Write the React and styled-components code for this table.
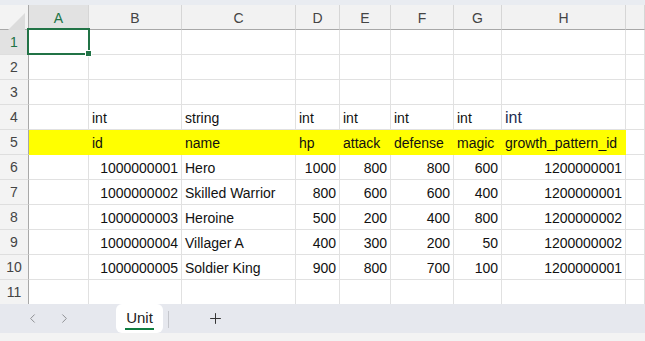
import React from "react";
import styled, { createGlobalStyle } from "styled-components";
import { ChevronLeft, ChevronRight, Plus } from "lucide-react";

const GlobalStyle = createGlobalStyle`
  html, body {
    margin: 0;
    padding: 0;
    background: #ffffff;
  }
  body {
    font-family: "Liberation Sans", Arial, sans-serif;
  }
`;

const Page = styled.div`
  width: 645px;
  height: 341px;
  display: flex;
  flex-direction: column;
  overflow: hidden;
  background: #ffffff;
`;

const TopStrip = styled.div`
  height: 5px;
  flex: none;
  background: #e9ecf1;
`;

const Sheet = styled.div`
  height: 299px;
  flex: none;
  overflow: hidden;
  display: grid;
  grid-template-columns: 29px 60px 93px 114px 44px 51px 63px 48px 124px 1fr;
  grid-auto-rows: 25px;
`;

const Corner = styled.div`
  position: relative;
  box-sizing: border-box;
  background: #f3f3f3;
  border-right: 1px solid #a8a8a8;
  border-bottom: 1px solid #a8a8a8;
  &::after {
    content: "";
    position: absolute;
    left: 8px;
    top: 8px;
    width: 17px;
    height: 17px;
    background: #dcdcdc;
    clip-path: polygon(100% 0, 100% 100%, 0 100%);
  }
`;

const ColHeader = styled.div`
  box-sizing: border-box;
  display: flex;
  align-items: center;
  justify-content: center;
  background: ${(p) => (p.$active ? "#e2e2e2" : "#f2f2f2")};
  color: ${(p) => (p.$active ? "#217346" : "#444444")};
  border-right: 1px solid #d6d6d6;
  border-bottom: 1px solid #a8a8a8;
  font-size: 14px;
  padding-top: 1px;
`;

const RowHeader = styled.div`
  box-sizing: border-box;
  display: flex;
  align-items: center;
  justify-content: center;
  background: ${(p) => (p.$active ? "#e2e2e2" : "#f3f3f3")};
  color: ${(p) => (p.$active ? "#217346" : "#444444")};
  border-right: 1px solid #a8a8a8;
  border-bottom: 1px solid #dedede;
  font-size: 14px;
`;

const Cell = styled.div`
  position: relative;
  box-sizing: border-box;
  display: flex;
  align-items: center;
  justify-content: ${(p) => (p.$align === "right" ? "flex-end" : "flex-start")};
  padding: 1px 3px 0 3px;
  white-space: nowrap;
  background: ${(p) => (p.$fill ? "#ffff00" : "#ffffff")};
  border-right: 1px solid ${(p) => (p.$fill ? "#ffff00" : "#e1e1e1")};
  border-bottom: 1px solid ${(p) => (p.$fill ? "#ffff00" : "#e1e1e1")};
  color: ${(p) => (p.$big ? "#1d2c52" : "#111111")};
  font-size: ${(p) => (p.$big ? "16px" : "14px")};
`;

const Selection = styled.div`
  position: absolute;
  left: -2px;
  top: -2px;
  right: -2px;
  bottom: -1px;
  border: 2px solid #217346;
  pointer-events: none;
  z-index: 2;
  &::after {
    content: "";
    position: absolute;
    right: -4px;
    bottom: -4px;
    width: 5px;
    height: 5px;
    background: #217346;
    border: 1px solid #ffffff;
  }
`;

const TabBar = styled.div`
  height: 29px;
  flex: none;
  display: flex;
  align-items: stretch;
  background: #e6e8ee;
`;

const NavGroup = styled.div`
  display: flex;
  align-items: center;
  gap: 17px;
  padding-left: 25px;
  width: 91px;
  color: #8f9094;
`;

const Tab = styled.div`
  width: 47px;
  box-sizing: border-box;
  background: #ffffff;
  border-radius: 6px;
  display: flex;
  flex-direction: column;
  align-items: center;
  justify-content: center;
  font-size: 15px;
  color: #222222;
  padding-top: 1px;
`;

const TabLabel = styled.span`
  line-height: 18px;
  border-bottom: 2px solid #107c41;
  padding: 0 1px 1px;
`;

const Divider = styled.div`
  width: 1px;
  background: #c4c6cc;
  margin: 7px 0 5px 5px;
`;

const AddButton = styled.div`
  display: flex;
  align-items: center;
  margin-left: 38px;
  color: #333333;
`;

const Footer = styled.div`
  flex: 1;
  background: #f3f3f3;
`;

const columns = ["A", "B", "C", "D", "E", "F", "G", "H", ""];

const rows = [
  [],
  [],
  [],
  [
    ["", "left"],
    ["int", "left"],
    ["string", "left"],
    ["int", "left"],
    ["int", "left"],
    ["int", "left"],
    ["int", "left"],
    ["int", "left", "big"],
  ],
  [
    ["", "left", "fill"],
    ["id", "left", "fill"],
    ["name", "left", "fill"],
    ["hp", "left", "fill"],
    ["attack", "left", "fill"],
    ["defense", "left", "fill"],
    ["magic", "left", "fill"],
    ["growth_pattern_id", "left", "fill"],
  ],
];

const units = [
  ["1000000001", "Hero", "1000", "800", "800", "600", "1200000001"],
  ["1000000002", "Skilled Warrior", "800", "600", "600", "400", "1200000001"],
  ["1000000003", "Heroine", "500", "200", "400", "800", "1200000002"],
  ["1000000004", "Villager A", "400", "300", "200", "50", "1200000002"],
  ["1000000005", "Soldier King", "900", "800", "700", "100", "1200000001"],
];

units.forEach((u) => {
  rows.push([
    ["", "left"],
    [u[0], "right"],
    [u[1], "left"],
    [u[2], "right"],
    [u[3], "right"],
    [u[4], "right"],
    [u[5], "right"],
    [u[6], "right"],
  ]);
});
rows.push([]);

function Row({ index, cells }) {
  const out = [];
  for (let c = 0; c < 9; c++) {
    const cell = cells[c] || ["", "left"];
    out.push(
      <Cell
        key={c}
        $align={cell[1]}
        $fill={cell[2] === "fill"}
        $big={cell[2] === "big"}
      >
        {cell[0]}
        {index === 0 && c === 0 ? <Selection /> : null}
      </Cell>
    );
  }
  return (
    <>
      <RowHeader $active={index === 0}>{index + 1}</RowHeader>
      {out}
    </>
  );
}

export default function App() {
  return (
    <>
      <GlobalStyle />
      <Page>
        <TopStrip />
        <Sheet>
          <Corner />
          {columns.map((c, i) => (
            <ColHeader key={i} $active={c === "A"}>
              {c}
            </ColHeader>
          ))}
          {rows.map((cells, i) => (
            <Row key={i} index={i} cells={cells} />
          ))}
        </Sheet>
        <TabBar>
          <NavGroup>
            <ChevronLeft size={15} strokeWidth={1.6} />
            <ChevronRight size={15} strokeWidth={1.6} />
          </NavGroup>
          <Tab>
            <TabLabel>Unit</TabLabel>
          </Tab>
          <Divider />
          <AddButton>
            <Plus size={17} strokeWidth={1.4} />
          </AddButton>
        </TabBar>
        <Footer />
      </Page>
    </>
  );
}
